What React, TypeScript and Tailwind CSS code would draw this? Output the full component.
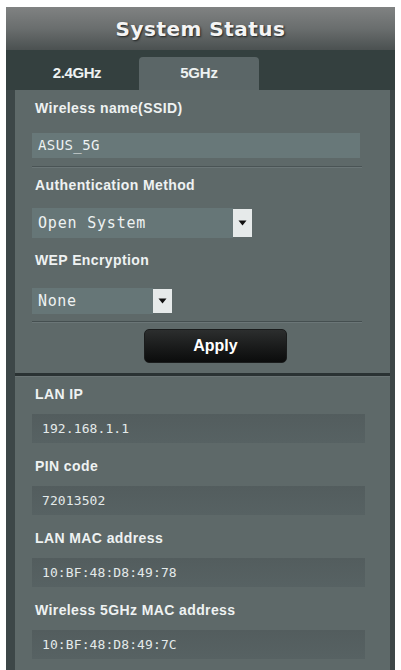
import React from "react";

const label =
  "pl-[3px] font-['Liberation_Sans',Arial,sans-serif] font-bold text-[14px] leading-4 text-[#eef2f2] tracking-[0.4px]";
const mono = "font-['DejaVu_Sans_Mono','Liberation_Mono',monospace]";

function SelectBox({ value, width, height }: { value: string; width: string; height: string }) {
  return (
    <div className={`flex items-stretch ${height}`}>
      <div className={`${width} bg-[#667677] flex items-center pl-[6px] text-[#eef2f2] ${mono}`}>{value}</div>
      <div className="w-[19px] bg-[#e6eaea] flex items-center justify-center my-[1px]">
        <svg width="9" height="6" viewBox="0 0 9 6">
          <path d="M0.5 0.5 L8.5 0.5 L4.5 5.5 Z" fill="#111" />
        </svg>
      </div>
    </div>
  );
}

function InfoRow({ title, value, first }: { title: string; value: string; first?: boolean }) {
  return (
    <div className={first ? "mt-[9px]" : "mt-[15px]"}>
      <div className={label}>{title}</div>
      <div
        className={`mt-[12px] w-[333px] h-[29px] flex items-center pl-[10px] bg-gradient-to-b from-[#535d5e] to-[#576263] text-[13px] tracking-[0.1px] text-[#e4eaea] ${mono}`}
      >
        {value}
      </div>
    </div>
  );
}

export default function App() {
  return (
    <div className="w-[401px] h-[670px] bg-white pt-[7px] pl-[6px] pr-[6px] overflow-hidden">
      <div className="w-[389px] h-[663px] flex flex-col bg-[#3c4647]">
        {/* title bar */}
        <div className="h-[43px] shrink-0 bg-gradient-to-b from-[#808282] via-[#6a6e6e] to-[#4b5151] flex items-center justify-center">
          <span className="font-['DejaVu_Sans',Verdana,sans-serif] font-bold text-[20px] text-[#f4f4f4] tracking-[0.5px] [text-shadow:1px_1px_2px_#1e2222]">
            System Status
          </span>
        </div>

        {/* band tabs */}
        <div className="h-[40px] shrink-0 bg-[#34403f] flex items-end pl-[9px] pr-[5px]">
          <div className="w-[124px] h-[33px] flex items-center justify-center font-['Liberation_Sans',Arial,sans-serif] font-bold text-[15px] text-[#eef2f2] tracking-[-0.4px]">
            2.4GHz
          </div>
          <div className="w-[120px] h-[33px] rounded-t-[4px] bg-[#5b6667] flex items-center justify-center font-['Liberation_Sans',Arial,sans-serif] font-bold text-[15px] text-[#eef2f2] tracking-[-0.2px]">
            5GHz
          </div>
        </div>

        {/* body */}
        <div className="flex-1 flex flex-col border-l-[9px] border-r-[5px] border-[#3d4748] bg-[#5e6969]">
          {/* wireless settings */}
          <div className="px-[17px] pt-[10px]">
            <div className={label}>Wireless name(SSID)</div>
            <div className={`mt-[17px] w-[328px] h-[25px] bg-[#687879] flex items-center pl-[6px] text-[14px] tracking-[0.4px] text-[#eef2f2] ${mono}`}>
              ASUS_5G
            </div>
            <div className="mt-[8px] w-[330px] h-[2px] border-t border-[#4a5455] border-b border-b-[#6b7677]" />

            <div className={`mt-[9px] ${label}`}>Authentication Method</div>
            <div className="mt-[15px]">
              <SelectBox value="Open System" width="w-[201px] text-[15px] tracking-[0.8px]" height="h-[30px]" />
            </div>

            <div className={`mt-[14px] ${label}`}>WEP Encryption</div>
            <div className="mt-[20px]">
              <SelectBox value="None" width="w-[121px] text-[15px] tracking-[0.6px]" height="h-[26px]" />
            </div>
            <div className="mt-[7px] w-[330px] h-[2px] border-t border-[#454f50] border-b border-b-[#6b7677]" />

            <div className="flex justify-center mt-[6px] pl-[26px]">
              <button className="w-[143px] h-[34px] rounded-[5px] bg-gradient-to-b from-[#2c2e2e] to-[#0b0c0c] border border-[#1a1c1c] font-['Liberation_Sans',Arial,sans-serif] font-bold text-[16px] text-white">
                Apply
              </button>
            </div>
          </div>

          <div className="mt-[10px] h-[3px] bg-[#2a3233]" />
          <div className="h-[1px] bg-[#6a7475]" />

          {/* LAN info */}
          <div className="px-[17px] flex-1">
            <InfoRow title="LAN IP" value="192.168.1.1" first />
            <InfoRow title="PIN code" value="72013502" />
            <InfoRow title="LAN MAC address" value="10:BF:48:D8:49:78" />
            <InfoRow title="Wireless 5GHz MAC address" value="10:BF:48:D8:49:7C" />
          </div>
        </div>
      </div>
    </div>
  );
}
